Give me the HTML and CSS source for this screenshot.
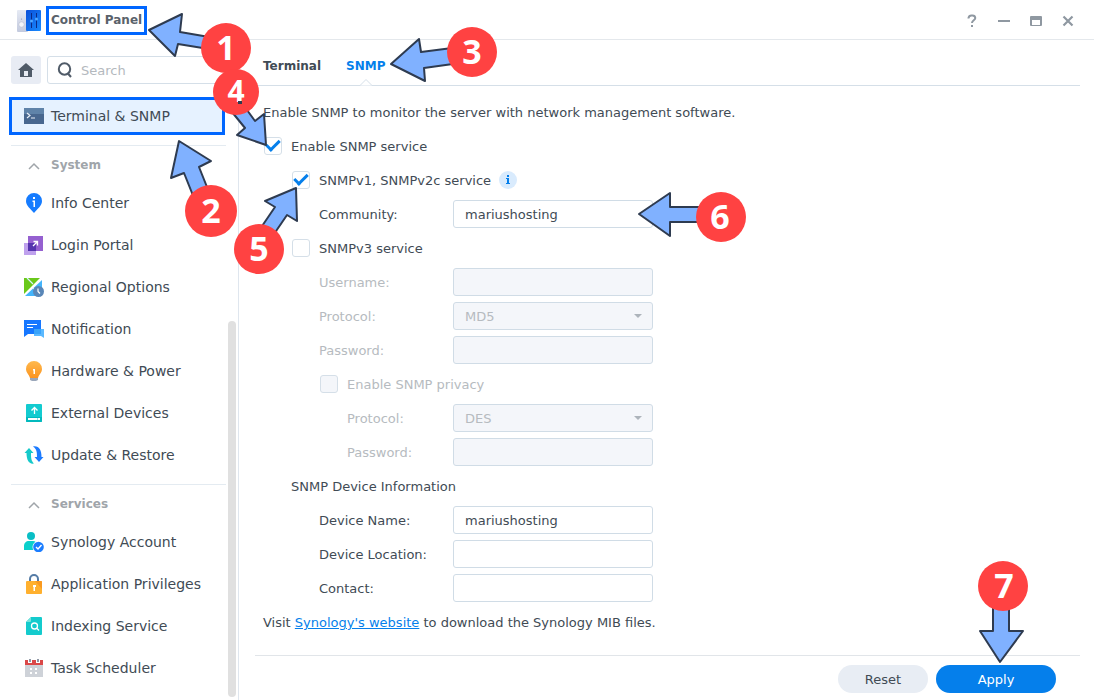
FILE: index.html
```html
<!DOCTYPE html>
<html lang="en">
<head>
    <meta charset="UTF-8">
    <meta name="viewport" content="width=device-width, initial-scale=1.0">
    <title>Control Panel</title>
    <link rel="stylesheet" href="styles.css">
</head>
<body>
<div class="window">
    <header class="titlebar">
        <svg class="app-icon" width="24" height="22" viewBox="0 0 24 22">
            <defs>
                <linearGradient id="blue" x1="0" y1="0" x2="1" y2="1"><stop offset="0" stop-color="#0a4fd8"/><stop offset="1" stop-color="#1a8cff"/></linearGradient>
                <linearGradient id="grey" x1="0" y1="0" x2="0" y2="1"><stop offset="0" stop-color="#e6eaf4"/><stop offset="1" stop-color="#c3cade"/></linearGradient>
            </defs>
            <rect width="11" height="22" rx="1" fill="url(#grey)"/>
            <rect x="9" width="15" height="21" rx="1" fill="url(#blue)"/>
            <circle cx="4.500" cy="14.500" r="2.700" fill="#f3f5fa" stroke="#b3bbcf" stroke-width=".6"/>
            <circle cx="4.500" cy="9" r=".6" fill="#8690a8"/>
            <path d="M14.500 3v15M19.500 3v15" stroke="#0b2a86" stroke-width="1"/>
            <circle cx="14.500" cy="11" r="1.500" fill="#4da6ff"/>
            <circle cx="19.500" cy="9" r="1.500" fill="#4da6ff"/>
        </svg>
        <h1>Control Panel</h1>
        <div class="window-controls">
            <button type="button" aria-label="Help"><svg width="12" height="14" viewBox="0 0 12 14"><path d="M2.500 4.500V4a3 3 0 0 1 3-2.500h1A2.800 2.800 0 0 1 9.300 4c0 2.300-3.300 2.300-3.300 5" fill="none" stroke="#8f98a1" stroke-width="2"/><path d="M5 11h2v2H5z" fill="#8f98a1"/></svg></button>
            <button type="button" aria-label="Minimize"><svg width="12" height="12"><path d="M0 5h12v2H0z" fill="#8f98a1"/></svg></button>
            <button type="button" aria-label="Maximize"><svg width="12" height="12"><path d="M1 1h10a1 1 0 0 1 1 1v8a1 1 0 0 1-1 1H1a1 1 0 0 1-1-1V2a1 1 0 0 1 1-1zM2 5v5h8V5z" fill="#8f98a1" fill-rule="evenodd"/></svg></button>
            <button type="button" aria-label="Close"><svg width="12" height="12"><path d="M1.500 1.500l9 9M10.500 1.500l-9 9" stroke="#8f98a1" stroke-width="2.200"/></svg></button>
        </div>
    </header>

    <div class="body">
        <!-- Sidebar -->
        <aside class="sidebar">
            <div class="sidebar-content">
                <div class="search-row">
                    <button type="button" class="home" aria-label="Home">
                        <svg width="16" height="14" viewBox="0 0 16 14"><path d="M8 0l8 7h-2v7H2V7H0zM6 8v5h4V8z" fill="#505b68" fill-rule="evenodd"/></svg>
                    </button>
                    <label class="search">
                        <svg width="16" height="16" viewBox="0 0 16 16" fill="none" stroke="#505b68" stroke-width="2"><circle cx="7.500" cy="7" r="5.700"/><path d="M10.500 11l3.500 4"/></svg>
                        <input type="text" placeholder="Search" aria-label="Search">
                    </label>
                </div>

                <nav class="menu">
                    <a href="#" class="item active">
                        <svg width="20" height="20" viewBox="0 0 20 20"><path d="M0 2h20v16H0z" fill="#48678f"/><path d="M0 2h20v6H0z" fill="#5f83a9"/><path d="M3 7l3 2.500L3 12M7 12h4" fill="none" stroke="#e9f0f8" stroke-width="1.200"/></svg>
                        Terminal &amp; SNMP
                    </a>

                    <h2><svg width="12" height="8" viewBox="0 0 12 8"><path d="M1 7l5-5 5 5" fill="none" stroke="#a0a5aa" stroke-width="1.500"/></svg>System</h2>
                    <a href="#" class="item">
                        <svg width="20" height="20" viewBox="0 0 20 20"><path d="M10 0a8 8 0 0 1 8 8c0 5-4.500 7.500-8 12-3.500-4.500-8-7-8-12a8 8 0 0 1 8-8z" fill="#167cff"/><path d="M9 4h2v2H9zM8.500 7.500H11V14H9.500V9h-1z" fill="#fff"/></svg>
                        Info Center
                    </a>
                    <a href="#" class="item">
                        <svg width="20" height="20" viewBox="0 0 20 20"><path d="M0 8h12v12H0z" fill="#bfa1ed"/><path d="M4 1h15v15H4z" fill="#9560d0"/><path d="M4 8h8v8H4z" fill="#5634ae"/><path d="M9 11l4.500-4.500M9.500 6.500h4v4" fill="none" stroke="#fff" stroke-width="1.300"/></svg>
                        Login Portal
                    </a>
                    <a href="#" class="item">
                        <svg width="20" height="20" viewBox="0 0 20 20"><path d="M0 1h18v18H0z" fill="#fff"/><path d="M0 1h16L0 17z" fill="#6ac81b"/><path d="M18 3v16H1z" fill="#43b4fb"/><path d="M3 1l6 6M9 11l8 8" stroke="#d9f2ff" stroke-width="1.200"/><circle cx="14.500" cy="14.500" r="5.500" fill="#5986b7"/><path d="M14 11.500v3l2 2" fill="none" stroke="#fff" stroke-width="1.200"/></svg>
                        Regional Options
                    </a>
                    <a href="#" class="item">
                        <svg width="20" height="20" viewBox="0 0 20 20"><path d="M0 1h17v14H4l-4 3z" fill="#1677ff"/><path d="M10 10h10v9l-3-2h-7z" fill="#5bb9ff"/><path d="M10 10h7v5h-7z" fill="#39a3fa"/><path d="M3 5.500h10M3 8.500h6" stroke="#fff" stroke-width="1.200"/></svg>
                        Notification
                    </a>
                    <a href="#" class="item">
                        <svg width="20" height="20" viewBox="0 0 20 20"><defs><linearGradient id="bulb" x1="0" y1="0" x2="0" y2="1"><stop offset="0" stop-color="#ffb94d"/><stop offset="1" stop-color="#fb9420"/></linearGradient></defs><path d="M10 0a8 8 0 0 1 8 8c0 4-3 5-4 9H6c-1-4-4-5-4-9a8 8 0 0 1 8-8z" fill="url(#bulb)"/><path d="M6 17h8v2l-2 1H8l-2-1z" fill="#9aa7ba"/><path d="M9 8h2v5H9.500V9.500H9z" fill="#fff"/></svg>
                        Hardware &amp; Power
                    </a>
                    <a href="#" class="item">
                        <svg width="20" height="20" viewBox="0 0 20 20"><rect x="2" y="1" width="16" height="18" rx="1" fill="#13cbd0"/><path d="M2 14h16v4a1 1 0 0 1-1 1H3a1 1 0 0 1-1-1z" fill="#03b9bd"/><path d="M10.500 11V5M7.500 7.500l3-3 3 3" fill="none" stroke="#fff" stroke-width="1.300"/><path d="M4 15h12v2H4z" fill="#fff"/><path d="M13 15.500h1v1h-1z" fill="#13cbd0"/></svg>
                        External Devices
                    </a>
                    <a href="#" class="item">
                        <svg width="20" height="20" viewBox="0 0 20 20"><path d="M5 3l4.500 5H7c0 4 0 8 3 10.500C5 19.500 2.500 15 2.500 8H.5z" fill="#16c9ca"/><path d="M15 17l-4.500-5H13c0-4 0-8-4-10.500C15 .5 17.500 5 17.500 12h2z" fill="#1c7bff"/></svg>
                        Update &amp; Restore
                    </a>

                    <h2><svg width="12" height="8" viewBox="0 0 12 8"><path d="M1 7l5-5 5 5" fill="none" stroke="#a0a5aa" stroke-width="1.500"/></svg>Services</h2>
                    <a href="#" class="item">
                        <svg width="20" height="20" viewBox="0 0 20 20"><circle cx="7" cy="4" r="4" fill="#09bec5"/><path d="M0 18v-4c0-3 2-5 5-5h4c2 0 4 1 4 4v5z" fill="#0bd0cb"/><circle cx="14.500" cy="15" r="6" fill="#fff"/><circle cx="14.500" cy="15" r="5.300" fill="#1b7dff"/><path d="M12 15l2 2 3.500-4" fill="none" stroke="#fff" stroke-width="1.400"/></svg>
                        Synology Account
                    </a>
                    <a href="#" class="item">
                        <svg width="20" height="20" viewBox="0 0 20 20"><path d="M6 8V5a4 4 0 0 1 8 0v3" fill="none" stroke="#557ca6" stroke-width="2"/><rect x="2" y="7" width="16" height="13" rx="1" fill="#ffb02e"/><path d="M11 7h6a1 1 0 0 1 1 1v7z" fill="#fa9a20"/><path d="M9 11h3v2h-1v4H9.500v-4H9z" fill="#fff"/></svg>
                        Application Privileges
                    </a>
                    <a href="#" class="item">
                        <svg width="20" height="20" viewBox="0 0 20 20"><path d="M7 1h10a1 1 0 0 1 1 1v16a1 1 0 0 1-1 1H3a1 1 0 0 1-1-1V6z" fill="#14cbcd"/><path d="M7 1v4a1 1 0 0 1-1 1H2z" fill="#76e4dc"/><circle cx="10.500" cy="10" r="3" fill="none" stroke="#fff" stroke-width="1.300"/><path d="M12.500 12l2.500 2.500" stroke="#fff" stroke-width="1.300"/></svg>
                        Indexing Service
                    </a>
                    <a href="#" class="item">
                        <svg width="20" height="20" viewBox="0 0 20 20"><path d="M1 6h18v13H1z" fill="#ced2d8"/><path d="M1 2h18v5H1z" fill="#da4848"/><path d="M4 0h4v5H4zM12 0h4v5h-4z" fill="#fff"/><path d="M5 1h2v3H5zM13 1h2v3h-2z" fill="#8e98a6"/><path d="M6 10h2v2H6zM11 10h2v2h-2zM6 14h2v2H6zM11 14h2v2h-2z" fill="#fff"/></svg>
                        Task Scheduler
                    </a>
                </nav>
            </div>
            <div class="scroll-thumb"></div>
        </aside>

        <!-- SNMP settings -->
        <main>
            <nav class="tabs">
                <a href="#">Terminal</a>
                <a href="#" class="current">SNMP
                    <svg class="notch" width="12" height="7" viewBox="0 0 12 7"><path d="M0 6.500L6 .5l6 6z" fill="#fff"/><path d="M0 6.500L6 .5l6 6" fill="none" stroke="#d5dfe8"/></svg>
                </a>
            </nav>

            <form id="snmp" class="settings">
                <p>Enable SNMP to monitor the server with network management software.</p>
                <div class="row">
                    <label class="check"><input type="checkbox" checked>Enable SNMP service</label>
                </div>
                <div class="row level-1">
                    <label class="check"><input type="checkbox" checked>SNMPv1, SNMPv2c service</label>
                    <svg class="info" width="18" height="18" viewBox="0 0 18 18"><circle cx="9" cy="9" r="9" fill="#d9ebfd"/><path d="M8 4h2v2H8zM7 7h3v5h1v1H7v-1h1V8H7z" fill="#057feb"/></svg>
                </div>
                <div class="row level-2">
                    <label for="community">Community:</label>
                    <input type="text" id="community" value="mariushosting">
                </div>
                <div class="row level-1">
                    <label class="check"><input type="checkbox">SNMPv3 service</label>
                </div>
                <div class="row level-2 disabled">
                    <label for="username">Username:</label>
                    <input type="text" id="username" disabled>
                </div>
                <div class="row level-2 disabled">
                    <label for="auth-protocol">Protocol:</label>
                    <span class="select"><select id="auth-protocol" disabled><option>MD5</option></select></span>
                </div>
                <div class="row level-2 disabled">
                    <label for="auth-password">Password:</label>
                    <input type="password" id="auth-password" disabled>
                </div>
                <div class="row level-2 disabled">
                    <label class="check"><input type="checkbox" disabled>Enable SNMP privacy</label>
                </div>
                <div class="row level-3 disabled">
                    <label for="priv-protocol">Protocol:</label>
                    <span class="select"><select id="priv-protocol" disabled><option>DES</option></select></span>
                </div>
                <div class="row level-3 disabled">
                    <label for="priv-password">Password:</label>
                    <input type="password" id="priv-password" disabled>
                </div>
                <p class="level-1">SNMP Device Information</p>
                <div class="row level-2">
                    <label for="device-name">Device Name:</label>
                    <input type="text" id="device-name" value="mariushosting">
                </div>
                <div class="row level-2">
                    <label for="device-location">Device Location:</label>
                    <input type="text" id="device-location">
                </div>
                <div class="row level-2">
                    <label for="contact">Contact:</label>
                    <input type="text" id="contact">
                </div>
                <p>Visit <a href="#">Synology's website</a> to download the Synology MIB files.</p>
            </form>

            <footer>
                <button type="reset" form="snmp" class="btn">Reset</button>
                <button type="submit" form="snmp" class="btn primary">Apply</button>
            </footer>
        </main>
    </div>

    <!-- Numbered steps drawn over the window -->
    <svg class="steps" width="760" height="280" viewBox="0 0 760 280">
        <path class="arrow" d="M149 30L182 14L180 32L215 38V50L178 44L175 56Z"/>
        <path class="arrow" d="M179 141L171 178L184 173L196 203L213 202L199 167L211 161Z"/>
        <path class="arrow" d="M391 64L419 39L421 52L460 47V63L424 68L425 81Z"/>
        <path class="arrow" d="M296 188L265 201L275 207L258 232L272 237L287 215L297 221Z"/>
        <path class="arrow" d="M639 214L670 193V207H710V222H670V236Z"/>
        <circle cx="226" cy="48" r="25"/>
        <path class="arrow" d="M266 145L237 135L245 128L232 112L247 110L255 121L264 114Z"/>
        <circle cx="236" cy="92" r="23"/>
        <circle cx="211" cy="211" r="26"/>
        <circle cx="472" cy="52" r="25"/>
        <circle cx="259" cy="249" r="25"/>
        <circle cx="721" cy="217" r="25"/>
        <text x="226" y="60">1</text>
        <text x="211" y="223">2</text>
        <text x="472" y="64">3</text>
        <text x="236" y="102" class="small">4</text>
        <text x="259" y="261">5</text>
        <text x="720" y="229">6</text>
        <path class="dot" d="M238 101h4v3h-4z"/>
    </svg>
    <svg class="steps last-step" width="54" height="104" viewBox="976 560 54 104">
        <path class="arrow" d="M1000 662L980 631H993V600H1009V631H1023Z"/>
        <circle cx="1003" cy="586" r="25"/>
        <text x="1004" y="598">7</text>
    </svg>
</div>
</body>
</html>
```
FILE: styles.css
```css
* {
    box-sizing: border-box;
}
body {
    margin: 0;
    font-family: "DejaVu Sans", Verdana, sans-serif;
    font-size: 13px;
    line-height: 19px;
    color: #414b55;
    background: #fff;
}
input, select, button {
    font: inherit;
    color: inherit;
}
button {
    border: none;
    background: none;
    padding: 0;
    cursor: pointer;
}
h1, h2, p {
    margin: 0;
    font-size: 13px;
}
.window {
    position: relative;
    display: flex;
    flex-direction: column;
    min-height: 100vh;
    overflow: hidden;
}

/* Title bar */
.titlebar {
    display: flex;
    align-items: center;
    height: 40px;
    padding: 2px 20px 0 17px;
    border-bottom: 1px solid #e4e8ec;
}
.titlebar h1 {
    margin-left: 5px;
    padding: 2px 2px;
    border: 3px solid #0066ff;
    font-size: 12px;
    color: #5a626b;
}
.window-controls {
    display: flex;
    gap: 20px;
    margin-left: auto;
}
.window-controls button {
    display: flex;
    align-items: center;
    justify-content: center;
    width: 12px;
    height: 20px;
}

/* Sidebar */
.body {
    display: flex;
    flex: 1;
}
.sidebar {
    display: flex;
    flex: 0 0 239px;
    border-right: 1px solid #dfe6ee;
}
.sidebar-content {
    flex: 1;
    padding: 16px 2px 0 11px;
}
.search-row {
    display: flex;
    gap: 6px;
    margin-bottom: 11px;
}
.home {
    display: flex;
    align-items: center;
    justify-content: center;
    width: 30px;
    height: 28px;
    border-radius: 3px;
    background: #e8ecf4;
}
.search {
    display: flex;
    flex: 1;
    align-items: center;
    gap: 8px;
    height: 28px;
    padding: 0 9px;
    border: 1px solid #d5dfe8;
    border-radius: 3px;
}
.search svg {
    flex: none;
}
.search input {
    width: 100%;
    min-width: 0;
    padding: 0;
    border: none;
    outline: none;
}
.search input::placeholder {
    color: #b4b9be;
}
.menu {
    display: flex;
    flex-direction: column;
}
.menu h2 {
    display: flex;
    align-items: center;
    gap: 11px;
    height: 37px;
    margin-top: 8px;
    padding: 3px 0 0 17px;
    border-top: 1px solid #e4ebf1;
    font-size: 12px;
    color: #a0a5aa;
}
.item {
    display: flex;
    align-items: center;
    gap: 7px;
    height: 42px;
    padding-left: 13px;
    font-size: 14px;
    color: #414b55;
    text-decoration: none;
    white-space: nowrap;
}
.item.active {
    height: 38px;
    margin: 2px 1px 2px -2px;
    padding-left: 12px;
    border: 3px solid #0066ff;
    background: #e6f2ff;
}
.scroll-thumb {
    align-self: flex-end;
    width: 8px;
    height: 57%;
    margin: 0 2px 3px 0;
    border-radius: 4px;
    background: #e0e0e0;
}

/* Main panel */
main {
    display: flex;
    flex: 1;
    flex-direction: column;
    padding: 0 14px 0 16px;
}
.tabs {
    display: flex;
    gap: 25px;
    height: 46px;
    padding: 0 8px;
    border-bottom: 1px solid #d5dfe8;
}
.tabs a {
    position: relative;
    padding-top: 17px;
    font-size: 12px;
    font-weight: bold;
    color: #414b55;
    text-decoration: none;
}
.tabs .current {
    color: #057feb;
}
.notch {
    position: absolute;
    bottom: -1px;
    left: 50%;
    margin-left: -6px;
}
.settings {
    display: flex;
    flex: 1;
    flex-direction: column;
    gap: 6px;
    padding: 12px 8px 18px;
}
.settings p {
    height: 28px;
    line-height: 30px;
}
.settings p a {
    color: #057feb;
}
.row {
    display: flex;
    align-items: center;
    height: 28px;
}
.settings .level-1 {
    padding-left: 28px;
}
.settings .level-2 {
    padding-left: 56px;
}
.settings .level-3 {
    padding-left: 84px;
}
.row label {
    width: 134px;
}
.level-3 label {
    width: 106px;
}
.row .check {
    display: flex;
    align-items: center;
    width: auto;
}
.info {
    margin-left: 8px;
}
.disabled {
    color: #b6bbc0;
}
input[type="checkbox"] {
    appearance: none;
    width: 18px;
    height: 18px;
    margin: 0 9px 0 1px;
    border: 1px solid #d5dfe8;
    border-radius: 3px;
    background: #fff;
}
input[type="checkbox"]:checked::before {
    content: "";
    display: block;
    box-sizing: border-box;
    width: 14px;
    height: 8px;
    margin: 2px 0 0 1px;
    border: solid #057feb;
    border-width: 0 0 3px 3px;
    transform: rotate(-45deg);
}
.row input[type="text"], .row input[type="password"], .select {
    width: 200px;
    height: 28px;
}
.row input[type="text"], .row input[type="password"], select {
    padding: 0 11px;
    border: 1px solid #d0dce6;
    border-radius: 3px;
    background: #fff;
}
.select {
    position: relative;
}
select {
    appearance: none;
    width: 100%;
    height: 100%;
}
.select::after {
    content: "";
    position: absolute;
    top: 12px;
    right: 11px;
    border: 4px solid transparent;
    border-top-color: #adb4bb;
    border-bottom: none;
}
.row input:disabled, select:disabled {
    background: #f4f6fa;
    opacity: 1;
}

/* Buttons */
footer {
    display: flex;
    justify-content: flex-end;
    gap: 8px;
    padding: 9px 24px 7px;
    border-top: 1px solid #e1e5e9;
}
.btn {
    width: 90px;
    height: 28px;
    border-radius: 14px;
    background: #e8edf4;
}
.btn.primary {
    width: 120px;
    background: #057feb;
    color: #fff;
}

/* Numbered steps */
.steps {
    position: absolute;
    top: 0;
    left: 0;
    pointer-events: none;
}
.last-step {
    top: auto;
    right: 64px;
    bottom: 36px;
    left: auto;
}
.steps circle {
    fill: #ff4242;
}
.steps text {
    fill: #fff;
    font-family: "Open Sans", sans-serif;
    font-size: 34px;
    font-weight: 700;
    text-anchor: middle;
}
.steps .small {
    font-size: 30px;
}
.arrow {
    fill: #80b1ff;
    stroke: #2e3b50;
    stroke-width: 2;
    stroke-linejoin: round;
}
.dot {
    fill: #2e3b50;
}
```
